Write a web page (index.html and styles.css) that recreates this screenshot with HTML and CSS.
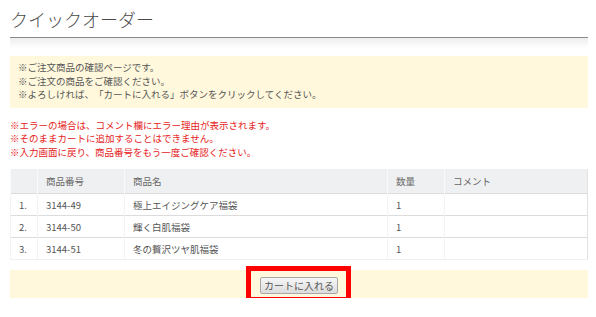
FILE: index.html
```html
<!DOCTYPE html>
<html lang="ja">
<head>
    <meta charset="UTF-8">
    <meta name="viewport" content="width=device-width, initial-scale=1.0">
    <title>クイックオーダー</title>
    <link rel="stylesheet" href="styles.css">
</head>
<body>
    <div class="page">
        <h1 class="page-title">クイックオーダー</h1>
        <div class="title-shade"></div>

        <div class="notice">
            <p>※ご注文商品の確認ページです。</p>
            <p>※ご注文の商品をご確認ください。</p>
            <p>※よろしければ、「カートに入れる」ボタンをクリックしてください。</p>
        </div>

        <div class="errors">
            <p>※エラーの場合は、コメント欄にエラー理由が表示されます。</p>
            <p>※そのままカートに追加することはできません。</p>
            <p>※入力画面に戻り、商品番号をもう一度ご確認ください。</p>
        </div>

        <table class="order-table">
            <thead>
                <tr>
                    <th class="col-no"></th>
                    <th class="col-code">商品番号</th>
                    <th class="col-name">商品名</th>
                    <th class="col-qty">数量</th>
                    <th class="col-comment">コメント</th>
                </tr>
            </thead>
            <tbody>
                <tr>
                    <td>1.</td>
                    <td>3144-49</td>
                    <td>極上エイジングケア福袋</td>
                    <td>1</td>
                    <td></td>
                </tr>
                <tr>
                    <td>2.</td>
                    <td>3144-50</td>
                    <td>輝く白肌福袋</td>
                    <td>1</td>
                    <td></td>
                </tr>
                <tr>
                    <td>3.</td>
                    <td>3144-51</td>
                    <td>冬の贅沢ツヤ肌福袋</td>
                    <td>1</td>
                    <td></td>
                </tr>
            </tbody>
        </table>

        <div class="cart-bar">
            <span class="highlight">
                <button class="cart-btn">カートに入れる</button>
            </span>
        </div>
    </div>
</body>
</html>
```

FILE: styles.css
```css
body {
    margin: 0;
    font-family: "Noto Sans CJK JP", "Noto Sans", sans-serif;
    color: #555;
    background: #fff;
    text-spacing-trim: space-all;
}
p {
    margin: 0;
}
.page {
    width: 578px;
    padding: 0 8px 0 10px;
}
.page-title {
    margin: 0;
    padding: 6px 0 5px;
    font-size: 18px;
    line-height: 26px;
    font-weight: 300;
    color: #4a4a4a;
    border-bottom: 1px solid #8a8a8a;
}
.title-shade {
    height: 10px;
    background: linear-gradient(rgba(0,0,0,0.07), rgba(0,0,0,0));
}
.notice {
    margin-top: 8px;
    padding: 5px 8px 6px;
    background-color: #fff8dc;
    font-size: 9.5px;
    line-height: 13.5px;
    color: #555;
}
.errors {
    margin-top: 11px;
    font-size: 9.5px;
    line-height: 13.5px;
    color: #e62222;
}
.order-table {
    width: 100%;
    margin-top: 10px;
    border-collapse: collapse;
    font-size: 9.5px;
    color: #555;
    border-right: 1px solid #e2e2e2;
}
.order-table th {
    height: 24px;
    padding: 0 8px;
    background-color: #eff0f1;
    font-weight: normal;
    text-align: left;
    color: #666;
    border-left: 1px solid #fafafa;
}
.order-table td {
    height: 21px;
    padding: 0 8px;
    border-top: 1px solid #dcdcdc;
    border-left: 1px solid #f3f3f3;
}
.order-table tbody tr:last-child td {
    border-bottom: 1px solid #f0f0f0;
}
.col-no {
    width: 10px;
}
.col-code {
    width: 70px;
}
.col-name {
    width: 246px;
}
.col-qty {
    width: 40px;
}
.cart-bar {
    margin-top: 10px;
    height: 28px;
    background-color: #fff8dc;
    display: flex;
    align-items: center;
    justify-content: center;
}
.highlight {
    position: relative;
    display: inline-flex;
    margin-top: 3px;
}
.highlight::after {
    content: "";
    position: absolute;
    top: -11px;
    bottom: -8px;
    left: -14px;
    right: -13px;
    border: 5px solid #ff0000;
}
.cart-btn {
    font-family: "Noto Sans CJK JP", sans-serif;
    font-size: 10px;
    line-height: 13px;
    padding: 1px 3px;
    color: #555;
    background: linear-gradient(#f7f7f7, #dcdcdc);
    border: 1px solid #a8a8a8;
    border-radius: 2px;
}
```
